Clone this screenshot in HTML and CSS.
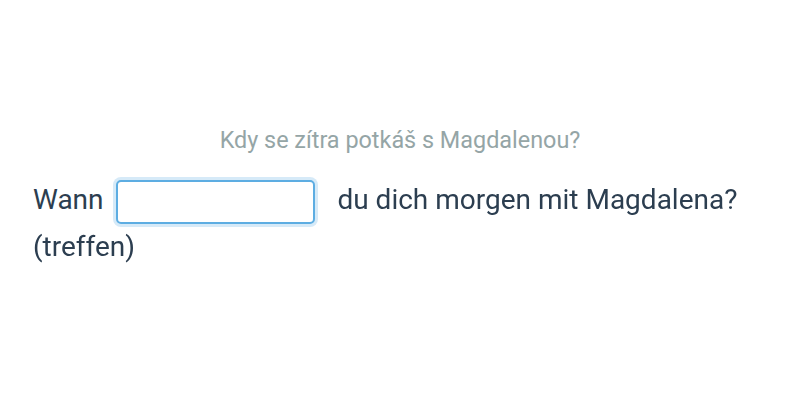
FILE: index.html
```html
<!DOCTYPE html>
<html>

<head>
  <title>Exercise</title>
  <link rel="stylesheet" href="styles.css">
</head>

<body>

  <div class="exercise">
    <p class="hint">Kdy se zítra potkáš s Magdalenou?</p>
    <p class="sentence">
      Wann <input class="gap" type="text" autofocus> du dich morgen mit Magdalena?
      <span class="verb">(treffen)</span>
    </p>
  </div>

</body>

</html>
```

FILE: styles.css
```css
* {
  font-family: Roboto, sans-serif;
}

body {
  margin: 0;
  background-color: #ffffff;
}

/* Exercise block */
.exercise {
  padding: 126px 33px 0 33px;
}

.hint {
  margin: 0 0 23px 0;
  text-align: center;
  font-size: 23.4px;
  line-height: 28px;
  color: #95a5a6;
}

.sentence {
  margin: 0;
  font-size: 28px;
  line-height: 46px;
  color: #2c3e50;
}

/* Input gap */
.gap {
  width: 199px;
  height: 44px;
  margin: 0 16px 0 5px;
  padding: 0 8px;
  border: 2px solid #5dade2;
  border-radius: 5px;
  box-shadow: 0 0 0 3px #d6eaf8;
  font-size: 28px;
  color: #2c3e50;
  vertical-align: middle;
  box-sizing: border-box;
  outline: none;
}
```
